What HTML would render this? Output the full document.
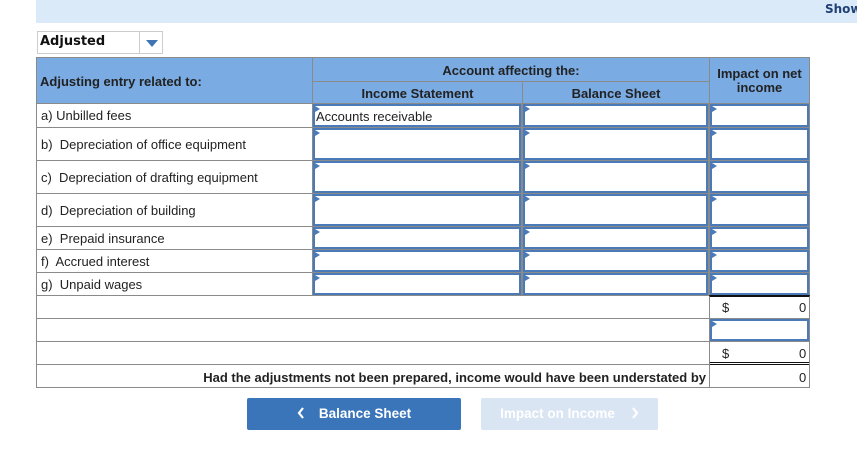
<!DOCTYPE html>
<html><head><style>
*{margin:0;padding:0;box-sizing:border-box}
body{width:857px;height:471px;background:#fff;position:relative;overflow:hidden;font-family:"Liberation Sans",Arial,sans-serif;font-size:13px;color:#222}
div{position:absolute}
.g{border:1px solid #8a8a8a}
.h{background:#7aabe3;font-weight:bold;color:#222}
.in{border:2px solid #4a7ab8;background:#fff}
.in:before{content:"";position:absolute;left:0;top:0;border-left:5px solid #4a7ab8;border-top:3px solid transparent;border-bottom:3px solid transparent}
.lab{display:flex;align-items:center;padding-left:4px}
</style></head><body>
<div style="left:36px;top:0;width:821px;height:23px;background:#dbeaf8"></div>
<div style="left:825px;top:2px;font-weight:bold;font-size:12px;color:#1f3f75;font-family:'DejaVu Sans',sans-serif">Show</div>

<div style="left:37px;top:31px;width:126px;height:23px;border:1px solid #ccc"></div>
<div style="left:40px;top:34px;font-weight:bold;font-size:13px;font-family:'DejaVu Sans',sans-serif;color:#111">Adjusted</div>
<div style="left:139px;top:32px;width:1px;height:21px;background:#ccc"></div>
<div style="left:146px;top:40px;width:0;height:0;border-left:6px solid transparent;border-right:6px solid transparent;border-top:7px solid #3f74b5"></div>

<!-- header -->
<div class="g h" style="left:36px;top:57px;width:277px;height:47px"></div>
<div style="left:40px;top:74px;font-weight:bold">Adjusting entry related to:</div>
<div class="g h" style="left:312px;top:57px;width:398px;height:25px"></div>
<div style="left:312px;top:63px;width:398px;text-align:center;font-weight:bold">Account affecting the:</div>
<div class="g h" style="left:312px;top:81px;width:211px;height:23px"></div>
<div style="left:312px;top:86px;width:211px;text-align:center;font-weight:bold">Income Statement</div>
<div class="g h" style="left:522px;top:81px;width:188px;height:23px"></div>
<div style="left:522px;top:86px;width:188px;text-align:center;font-weight:bold">Balance Sheet</div>
<div class="g h" style="left:709px;top:57px;width:101px;height:47px"></div>
<div style="left:709px;top:67px;width:101px;text-align:center;font-weight:bold;line-height:14px">Impact on net<br>income</div>

<!-- rows -->
<div class="g lab" style="left:36px;top:103px;width:277px;height:25px">a) Unbilled fees</div>
<div class="g lab" style="left:36px;top:127px;width:277px;height:34px">b)&nbsp; Depreciation of office equipment</div>
<div class="g lab" style="left:36px;top:160px;width:277px;height:34px">c)&nbsp; Depreciation of drafting equipment</div>
<div class="g lab" style="left:36px;top:193px;width:277px;height:34px">d)&nbsp; Depreciation of building</div>
<div class="g lab" style="left:36px;top:226px;width:277px;height:24px">e)&nbsp; Prepaid insurance</div>
<div class="g lab" style="left:36px;top:249px;width:277px;height:24px">f)&nbsp; Accrued interest</div>
<div class="g lab" style="left:36px;top:272px;width:277px;height:24px">g)&nbsp; Unpaid wages</div>

<div class="g" style="left:312px;top:103px;width:498px;height:193px;background:#8a8a8a"></div>

<div class="in" style="left:313px;top:104px;width:208px;height:23px"><div style="left:1px;top:3px;color:#222">Accounts receivable</div></div>
<div class="in" style="left:523px;top:104px;width:185px;height:23px"></div>
<div class="in" style="left:710px;top:104px;width:99px;height:23px"></div>

<div class="in" style="left:313px;top:128px;width:208px;height:32px"></div>
<div class="in" style="left:523px;top:128px;width:185px;height:32px"></div>
<div class="in" style="left:710px;top:128px;width:99px;height:32px"></div>

<div class="in" style="left:313px;top:161px;width:208px;height:32px"></div>
<div class="in" style="left:523px;top:161px;width:185px;height:32px"></div>
<div class="in" style="left:710px;top:161px;width:99px;height:32px"></div>

<div class="in" style="left:313px;top:194px;width:208px;height:32px"></div>
<div class="in" style="left:523px;top:194px;width:185px;height:32px"></div>
<div class="in" style="left:710px;top:194px;width:99px;height:32px"></div>

<div class="in" style="left:313px;top:227px;width:208px;height:22px"></div>
<div class="in" style="left:523px;top:227px;width:185px;height:22px"></div>
<div class="in" style="left:710px;top:227px;width:99px;height:22px"></div>

<div class="in" style="left:313px;top:250px;width:208px;height:22px"></div>
<div class="in" style="left:523px;top:250px;width:185px;height:22px"></div>
<div class="in" style="left:710px;top:250px;width:99px;height:22px"></div>

<div class="in" style="left:313px;top:273px;width:208px;height:22px"></div>
<div class="in" style="left:523px;top:273px;width:185px;height:22px"></div>
<div class="in" style="left:710px;top:273px;width:99px;height:22px"></div>

<!-- totals -->
<div class="g" style="left:36px;top:295px;width:674px;height:24px"></div>
<div class="g" style="left:709px;top:295px;width:101px;height:24px;border-top:2px solid #111"></div>
<div style="left:722px;top:300px">$</div><div style="left:799px;top:300px">0</div>

<div class="g" style="left:36px;top:318px;width:674px;height:24px"></div>
<div class="g" style="left:709px;top:318px;width:101px;height:24px;background:#8a8a8a"></div>
<div class="in" style="left:710px;top:319px;width:99px;height:22px"></div>

<div class="g" style="left:36px;top:341px;width:674px;height:24px"></div>
<div class="g" style="left:709px;top:341px;width:101px;height:24px;border-bottom:3px double #111"></div>
<div style="left:722px;top:346px">$</div><div style="left:799px;top:346px">0</div>

<div class="g" style="left:36px;top:364px;width:674px;height:24px"></div>
<div class="g" style="left:709px;top:364px;width:101px;height:24px;border-top:none"></div>
<div style="left:36px;top:370px;width:670px;text-align:right;font-weight:bold">Had the adjustments not been prepared, income would have been understated by</div>
<div style="left:799px;top:370px">0</div>

<!-- buttons -->
<div style="left:247px;top:398px;width:214px;height:32px;background:#3a75b9;border-radius:2px;color:#fff;font-weight:bold;font-size:13.5px;text-align:center;line-height:32px">
<svg width="8" height="12" viewBox="0 0 8 12" style="vertical-align:-1px;margin-right:14px"><path d="M6 1 L2 6 L6 11" stroke="#fff" stroke-width="2.2" fill="none"/></svg>Balance Sheet</div>
<div style="left:481px;top:398px;width:177px;height:32px;background:#d9e5f3;border-radius:2px;color:#fff;font-weight:bold;font-size:13.5px;text-align:center;line-height:32px">Impact on Income<svg width="8" height="12" viewBox="0 0 8 12" style="vertical-align:-1px;margin-left:16px"><path d="M2 1 L6 6 L2 11" stroke="#fff" stroke-width="2.2" fill="none"/></svg></div>
</body></html>
